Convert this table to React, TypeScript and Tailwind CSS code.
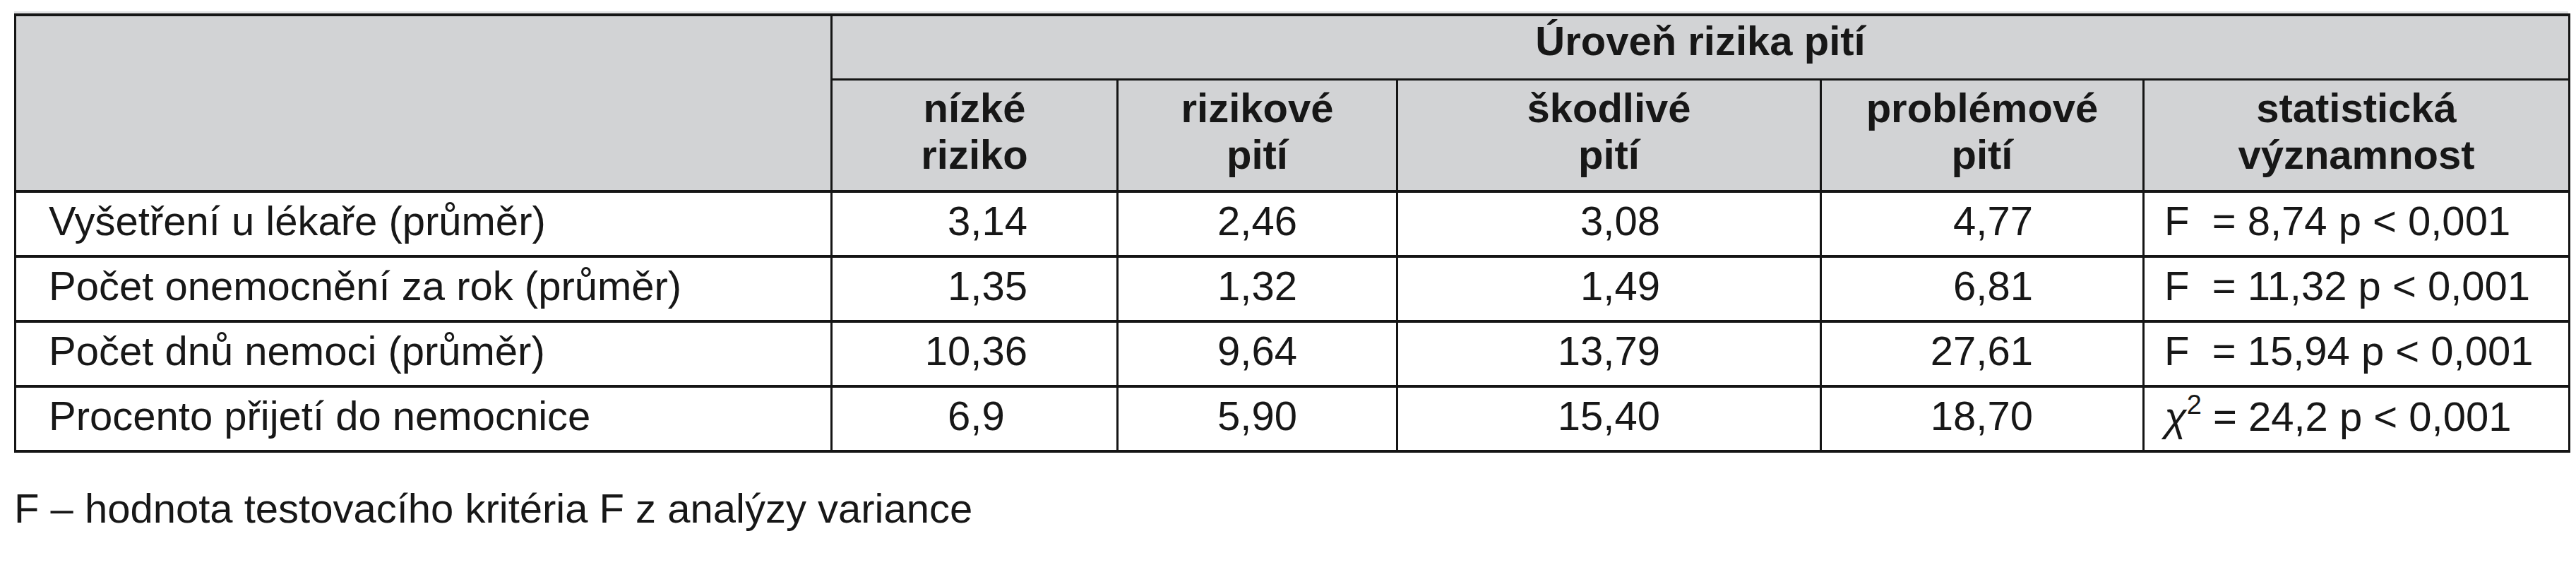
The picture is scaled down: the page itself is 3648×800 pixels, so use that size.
import React from 'react';

type Row = {
  label: string;
  values: string[];
  stat: React.ReactNode;
};

const rows: Row[] = [
  {
    label: 'Vyšetření u lékaře (průměr)',
    values: ['3,14', '2,46', '3,08', '4,77'],
    stat: <>F&nbsp; = 8,74 p &lt; 0,001</>,
  },
  {
    label: 'Počet onemocnění za rok (průměr)',
    values: ['1,35', '1,32', '1,49', '6,81'],
    stat: <>F&nbsp; = 11,32 p &lt; 0,001</>,
  },
  {
    label: 'Počet dnů nemoci (průměr)',
    values: ['10,36', '9,64', '13,79', '27,61'],
    stat: <>F&nbsp; = 15,94 p &lt; 0,001</>,
  },
  {
    label: 'Procento přijetí do nemocnice',
    values: ['6,9', '5,90', '15,40', '18,70'],
    stat: (
      <>
        <span className="italic">χ</span>
        <span className="text-[38px] leading-none align-[24px]">2</span> = 24,2 p &lt; 0,001
      </>
    ),
  },
];

const numPad = ['pr-[126px]', 'pr-[140px]', 'pr-[226px]', 'pr-[155px]'];

const subHeads = [
  ['nízké', 'riziko'],
  ['rizikové', 'pití'],
  ['škodlivé', 'pití'],
  ['problémové', 'pití'],
  ['statistická', 'významnost'],
];

const cell = 'border-x-[3px] border-y-[4px] border-[#151515]';

const App: React.FC = () => {
  return (
    <div className="min-h-[800px] w-[3648px] bg-white pl-[20px] pt-[16px] font-['Liberation_Sans',Arial,sans-serif] text-[58px] leading-[1.15] text-[#171717]">
      {/* light grey fringe above the top rule */}
      <div className="h-[3px] w-[3617px] bg-[#e2e3e5]" />

      <table className="w-[3617px] table-fixed border-collapse">
        <colgroup>
          <col className="w-[1156px]" />
          <col className="w-[405px]" />
          <col className="w-[396px]" />
          <col className="w-[600px]" />
          <col className="w-[457px]" />
          <col className="w-[603px]" />
        </colgroup>
        <thead className="bg-[#d2d3d5] font-bold">
          <tr>
            <th rowSpan={2} className={cell} />
            <th colSpan={5} className={`${cell} border-b-[3px] h-[91px] pb-[16px] text-center font-bold`}>
              Úroveň rizika pití
            </th>
          </tr>
          <tr>
            {subHeads.map(([a, b]) => (
              <th key={a} className={`${cell} border-t-[3px] h-[159px] pb-[10px] text-center font-bold`}>
                {a}
                <br />
                {b}
              </th>
            ))}
          </tr>
        </thead>
        <tbody>
          {rows.map((r) => (
            <tr key={r.label}>
              <td className={`${cell} h-[92px] pb-[8px] pl-[46px] text-left whitespace-nowrap`}>{r.label}</td>
              {r.values.map((v, i) => (
                <td key={i} className={`${cell} h-[92px] pb-[8px] text-right ${numPad[i]}`}>
                  {v}
                  {v.split(',')[1].length === 1 && <span className="invisible">0</span>}
                </td>
              ))}
              <td className={`${cell} h-[92px] pb-[8px] pl-[28px] text-left whitespace-nowrap`}>{r.stat}</td>
            </tr>
          ))}
        </tbody>
      </table>

      <p className="mt-[46px] whitespace-nowrap">F – hodnota testovacího kritéria F z analýzy variance</p>
    </div>
  );
};

export default App;
